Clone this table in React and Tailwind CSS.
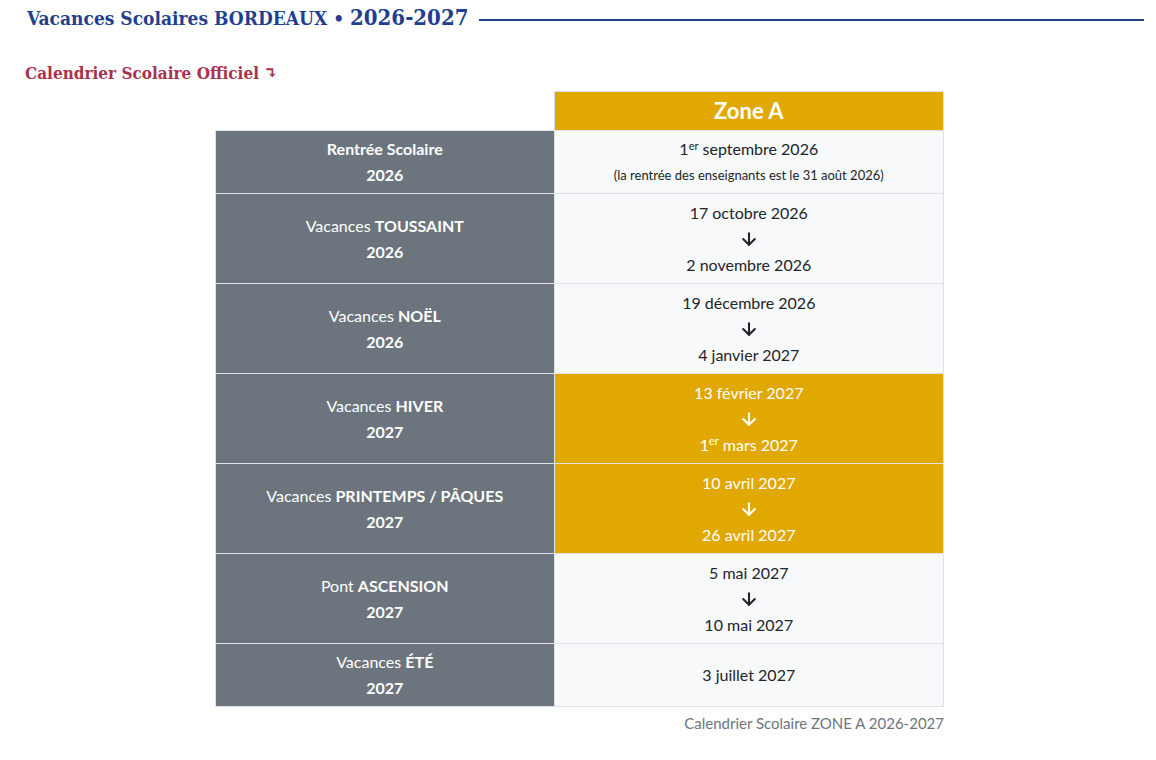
import React from "react";
import { ArrowDown } from "lucide-react";

const rows = [
  { label: [null, "Rentrée Scolaire"], year: "2026", type: "rentree" },
  { label: ["Vacances", "TOUSSAINT"], year: "2026", from: "17 octobre 2026", to: "2 novembre 2026" },
  { label: ["Vacances", "NOËL"], year: "2026", from: "19 décembre 2026", to: "4 janvier 2027" },
  { label: ["Vacances", "HIVER"], year: "2027", from: "13 février 2027", to: "1er mars 2027", hl: true },
  { label: ["Vacances", "PRINTEMPS / PÂQUES"], year: "2027", from: "10 avril 2027", to: "26 avril 2027", hl: true },
  { label: ["Pont", "ASCENSION"], year: "2027", from: "5 mai 2027", to: "10 mai 2027" },
  { label: ["Vacances", "ÉTÉ"], year: "2027", single: "3 juillet 2027" },
];

function DateText({ t }) {
  if (t.startsWith("1er ")) {
    return (
      <span>
        1<sup className="text-[11px] top-[-0.5em]">er</sup> {t.slice(4)}
      </span>
    );
  }
  return <span>{t}</span>;
}

const slab = { fontFamily: "'DejaVu Serif', 'Liberation Serif', serif", fontStretch: "condensed" };

export default function App() {
  return (
    <div className="min-h-[760px] bg-white" style={{ fontFamily: "Lato, 'Open Sans', sans-serif" }}>
      <div className="pl-[15px] pr-[12px] pt-[4px]">
        <div className="flex items-center pl-[12px]">
          <h1 className="whitespace-nowrap text-[19px] font-bold leading-[26px] text-[#1f3f8f]" style={slab}>
            Vacances Scolaires BORDEAUX • <span className="text-[22px]">2026-2027</span>
          </h1>
          <div className="ml-[11px] mt-[4px] h-[2px] flex-1 bg-[#1f3f8f]" />
        </div>

        <h2 className="mt-[31px] pl-[10px] text-[17px] font-bold leading-[22px] text-[#a8324a]" style={slab}>
          Calendrier Scolaire Officiel <span className="text-[17px]">↴</span>
        </h2>

        <div className="mx-auto mt-[7px] w-[729px]">
          <table className="w-full border-collapse text-[16px] leading-[26px]">
            <colgroup>
              <col className="w-[339px]" />
              <col className="w-[390px]" />
            </colgroup>
            <thead>
              <tr>
                <th className="border-0 p-0" />
                <th className="h-[39px] border border-[#dee2e6] bg-[#e0a800] p-0 text-center text-[22px] font-bold text-white">
                  Zone A
                </th>
              </tr>
            </thead>
            <tbody>
              {rows.map((r, i) => {
                const short = r.type === "rentree" || r.single;
                return (
                  <tr key={i} className={short ? "h-[63px]" : "h-[90px]"}>
                    <td className="border border-[#dee2e6] bg-[#6c757d] px-3 py-[5px] text-center align-middle text-white">
                      <div>
                        {r.label[0] && <span>{r.label[0]} </span>}
                        <span className="font-bold">{r.label[1]}</span>
                      </div>
                      <div className="font-bold">{r.year}</div>
                    </td>
                    <td
                      className={`border border-[#dee2e6] px-3 py-[5px] text-center align-middle ${
                        r.hl ? "bg-[#e0a800] text-white" : "bg-[#f8f9fa] text-[#212529]"
                      }`}
                    >
                      {r.type === "rentree" ? (
                        <>
                          <div>
                            <DateText t="1er septembre 2026" />
                          </div>
                          <div className="text-[13px]">(la rentrée des enseignants est le 31 août 2026)</div>
                        </>
                      ) : r.single ? (
                        <div>{r.single}</div>
                      ) : (
                        <>
                          <div>
                            <DateText t={r.from} />
                          </div>
                          <div className="flex h-[26px] items-center justify-center">
                            <ArrowDown size={20} strokeWidth={2.5} />
                          </div>
                          <div>
                            <DateText t={r.to} />
                          </div>
                        </>
                      )}
                    </td>
                  </tr>
                );
              })}
            </tbody>
          </table>
          <div className="mt-[6px] text-right text-[15px] leading-[20px] text-[#6c757d]">
            Calendrier Scolaire ZONE A 2026-2027
          </div>
        </div>
      </div>
    </div>
  );
}
